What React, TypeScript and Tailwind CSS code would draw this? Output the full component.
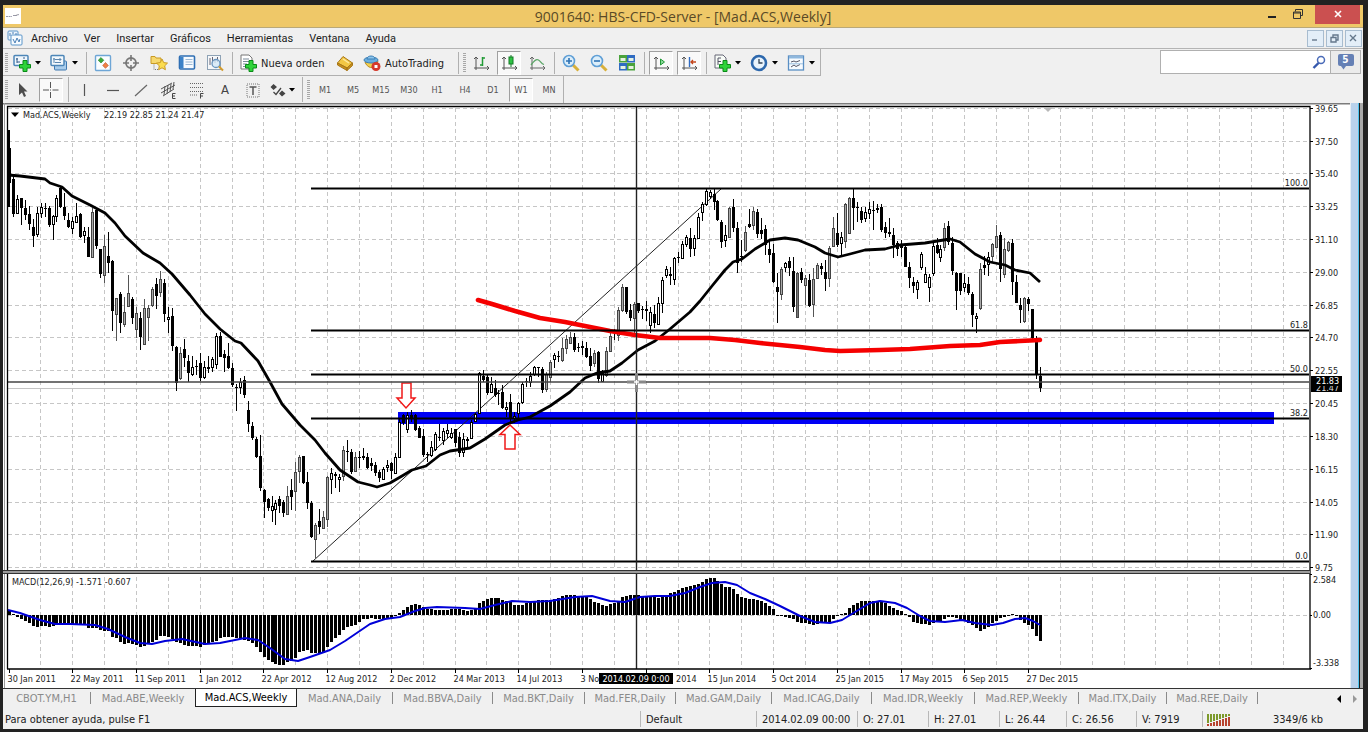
import type { ReactNode } from "react";

/* ---------- chart data ---------- */

// One weekly candle per entry: high, body top, body bottom, low (canvas units); the letter is the direction.
const CANDLES = `130 148 183 207 d,176 179 214 217 d,195 199 213 214 u,198 198 208 225 d,200 208 215 220 d,206 214 224 230 d,219 227 236 247 d,207 213 234 237 u,203 207 213 218 u,203 208 209 217 d,
206 208 225 227 d,215 216 224 240 u,195 198 216 222 u,187 188 207 208 d,193 207 216 220 d,213 220 227 228 d,217 221 228 234 u,203 216 222 223 u,213 214 237 238 d,227 231 235 243 u,
227 237 257 257 d,208 212 257 257 g,209 210 246 249 d,249 249 274 278 d,235 246 275 283 g,232 256 263 273 d,260 261 311 331 d,298 298 314 341 g,292 294 323 333 d,297 312 324 327 g,
275 293 306 307 g,297 299 318 324 d,307 313 329 338 g,312 318 337 350 d,299 308 344 344 g,305 308 317 341 g,287 289 305 307 g,278 284 296 309 d,271 279 292 297 g,279 283 314 322 d,
307 317 319 333 u,308 316 346 351 d,346 347 383 391 d,347 353 378 380 g,339 349 358 367 d,355 361 373 382 d,356 367 374 376 u,360 366 367 375 d,353 363 378 381 d,361 367 377 379 u,
356 367 368 373 u,357 359 367 372 u,333 336 364 369 u,332 336 357 357 d,350 354 358 372 d,343 356 368 369 d,363 368 385 387 d,384 387 388 411 d,378 382 387 394 u,376 380 395 398 d,
401 410 424 432 d,422 426 438 440 d,437 439 457 458 d,435 456 488 491 d,489 490 502 518 d,498 499 508 511 d,496 506 510 522 u,500 503 509 525 u,496 499 506 513 d,500 502 513 517 d,
486 496 514 515 g,479 490 497 510 d,462 472 491 511 g,455 457 471 483 g,456 456 483 484 d,472 482 503 509 d,501 503 537 538 d,523 525 539 559 g,509 521 527 534 d,511 517 528 529 g,
476 477 519 527 g,468 473 479 494 u,472 474 476 488 d,474 477 479 492 u,446 450 476 481 g,440 451 452 462 d,449 452 472 474 d,452 457 471 472 g,451 457 458 468 d,448 456 458 460 d,
453 457 468 469 d,458 463 466 471 d,462 465 473 476 d,470 472 478 482 d,467 469 479 480 u,460 465 467 472 u,462 463 471 479 d,453 457 473 474 u,418 422 457 457 u,414 415 423 425 d,
412 415 429 433 u,410 415 419 422 d,414 415 430 431 d,426 428 438 438 d,429 436 455 457 d,452 454 455 462 d,441 447 455 457 u,432 434 449 451 u,424 437 438 441 d,428 431 440 445 u,
424 430 433 438 u,428 433 437 439 u,429 429 443 447 d,432 437 453 457 d,433 439 452 457 u,437 439 441 448 d,420 422 438 439 u,413 414 421 422 u,372 373 413 413 u,370 376 380 382 d,
375 377 393 395 d,377 384 392 393 u,380 388 395 397 d,390 393 394 405 d,385 392 408 409 d,402 407 409 417 u,394 402 418 422 d,412 416 418 423 u,402 403 413 418 u,382 384 402 404 u,
378 381 382 387 d,372 376 382 387 u,366 367 374 376 u,367 367 368 377 d,367 369 390 393 d,372 374 389 392 g,360 362 377 382 g,353 355 359 368 u,351 356 357 362 d,338 348 360 362 g,
335 339 348 354 g,332 337 343 344 g,333 337 350 352 d,343 347 348 352 d,341 346 348 355 d,342 348 357 358 d,348 356 366 371 d,350 353 363 367 g,351 352 379 383 d,370 373 381 382 u,
347 351 375 377 g,333 336 351 352 g,329 332 333 340 d,307 310 335 341 g,284 287 310 312 g,287 287 312 314 d,304 310 318 321 d,302 304 318 335 g,303 303 311 313 d,306 309 310 319 d,
301 309 311 321 d,307 312 325 333 u,305 314 323 328 d,297 303 324 325 u,277 280 303 313 u,266 269 275 278 u,267 274 276 285 d,257 258 279 285 u,252 257 258 263 d,241 244 258 259 u,
235 237 244 247 u,228 238 249 257 d,235 238 248 256 u,213 217 238 238 u,202 204 212 221 u,189 191 204 206 u,190 192 196 199 u,189 194 202 210 d,200 201 220 221 d,220 222 242 248 d,
225 235 240 247 u,207 208 237 238 g,199 207 228 232 d,222 228 263 273 d,240 256 257 262 d,226 232 250 252 g,209 224 227 228 d,207 211 225 230 g,209 212 234 238 d,218 230 234 239 d,
225 229 245 255 d,240 249 255 263 d,244 253 282 283 d,273 287 292 323 d,267 269 294 300 g,262 263 267 272 u,257 261 268 276 d,257 271 307 312 d,272 273 317 317 G,268 272 280 283 d,
275 278 285 305 g,274 280 306 307 d,268 279 304 317 g,263 265 278 279 g,263 266 269 275 d,260 272 279 291 d,246 248 278 287 g,217 228 246 247 g,213 233 245 247 d,232 237 243 257 u,
203 204 241 248 g,197 198 233 234 g,189 198 208 230 d,202 207 208 222 d,207 211 220 223 d,207 212 218 222 u,202 209 213 219 u,201 210 211 230 d,204 208 210 213 d,204 207 230 232 d,
222 227 233 238 d,218 232 234 237 d,228 235 245 258 d,241 243 249 256 d,240 245 248 257 d,245 247 267 267 d,262 267 278 288 d,277 282 286 293 d,280 282 289 299 u,252 254 267 270 u,
267 274 282 283 u,274 277 287 302 u,241 246 273 276 u,238 245 253 254 d,245 249 257 262 u,223 228 247 251 g,221 226 242 245 d,237 243 271 275 d,272 273 291 310 d,273 273 291 295 d,
274 283 287 292 u,277 284 293 295 d,292 294 315 327 d,313 316 318 333 u,263 269 308 310 g,256 265 268 275 d,252 257 264 276 u,243 244 256 263 g,225 236 247 248 g,232 235 269 282 d,
238 249 274 278 g,241 242 250 252 g,239 243 282 295 d,275 282 303 303 d,298 305 310 323 d,297 298 321 323 g,297 299 304 311 d,309 309 338 342 d,336 340 374 379 d,367 376 388 392 d`
  .split(",")
  .map((row) => {
    const [h, t, b, l, kind] = row.trim().split(" ");
    return { high: +h, top: +t, bottom: +b, low: +l, kind };
  });

// Histogram key points: candle index and offset from zero in thirds of a unit; the rest is interpolated.
const MACD_KEYS: [number, number][] = [
  [0, -15], [1, -3], [2, 5], [3, 11], [4, 18], [5, 25], [6, 32], [7, 35], [8, 33], [10, 35], [12, 31], [14, 30], [16, 27], [19, 30],
  [20, 40], [22, 38], [23, 45], [25, 48], [26, 65], [27, 70], [28, 82], [29, 87], [30, 85], [32, 90], [33, 95], [34, 92], [36, 80],
  [37, 75], [38, 63], [39, 62], [40, 65], [41, 72], [42, 80], [43, 85], [45, 92], [48, 95], [50, 85], [52, 77], [53, 70], [54, 65],
  [56, 67], [57, 70], [59, 75], [61, 83], [62, 97], [63, 112], [64, 127], [65, 135], [66, 142], [67, 147], [68, 149], [69, 149],
  [70, 141], [71, 138], [72, 128], [73, 112], [74, 108], [75, 105], [76, 113], [79, 113], [80, 95], [81, 80], [82, 70], [83, 60],
  [84, 45], [85, 35], [87, 30], [88, 20], [89, 13], [91, 10], [94, 12], [96, 9], [97, 3], [98, -7], [99, -15], [100, -23], [101, -29],
  [102, -32], [103, -29], [104, -25], [105, -17], [108, -16], [112, -17], [113, -17], [115, -13], [116, -15], [117, -20], [118, -35],
  [119, -43], [120, -47], [121, -50], [123, -50], [124, -45], [126, -38], [127, -30], [129, -30], [130, -35], [131, -40], [133, -45],
  [136, -45], [138, -52], [139, -57], [141, -61], [143, -57], [145, -53], [146, -47], [147, -40], [149, -30], [150, -28], [151, -33],
  [152, -37], [153, -43], [154, -53], [155, -58], [158, -60], [160, -55], [163, -52], [165, -60], [167, -70], [169, -80], [171, -87],
  [173, -93], [174, -100], [175, -107], [176, -111], [177, -111], [178, -102], [179, -93], [180, -85], [181, -83], [182, -77],
  [183, -63], [184, -53], [186, -47], [187, -49], [189, -43], [190, -37], [191, -28], [192, -17], [193, 1], [194, 3], [195, 7],
  [197, 13], [198, 20], [200, 25], [202, 31], [204, 25], [206, 20], [207, 13], [208, 2], [209, -2], [210, -7], [211, -20], [212, -30],
  [213, -37], [214, -43], [217, -43], [219, -40], [220, -35], [221, -28], [222, -22], [223, -15], [224, -12], [225, -3], [226, 7],
  [227, 20], [228, 25], [231, 29], [232, 23], [234, 18], [235, 13], [236, 7], [237, 5], [238, 8], [241, 25], [242, 30], [243, 40],
  [244, 47], [245, 41], [246, 35], [247, 25], [248, 18], [249, 10], [250, 7], [251, 3], [252, -3], [253, 3], [254, 15], [255, 25],
  [256, 30], [257, 43], [258, 62], [259, 77],
];

const HISTOGRAM: number[] = [];
MACD_KEYS.forEach(([i, v], k) => {
  const [j, w] = MACD_KEYS[k + 1] ?? [i + 1, v];
  for (let n = i; n < j; n++) HISTOGRAM.push((v + ((w - v) * (n - i)) / (j - i)) / 3);
});

const MA_FAST =
  "8,175 20,176 45,179 50,183 62,187 72,196 90,205 105,213 115,223 125,236 143,253 160,263 172,274 190,295 205,314 220,329 235,341 241,343 258,361 270,382 282,404 300,425 315,440 325,453 340,470 358,482 370,485 377,487 390,483 402,476 412,470 426,466 440,455 450,451 470,448 485,439 505,425 518,420 530,417 550,406 570,392 585,378 597,373 610,371 622,363 638,350 655,341 670,329 690,312 700,301 712,286 725,270 733,262 742,259 755,249 770,240 785,238 798,240 815,247 825,253 838,257 850,254 865,250 885,249 900,245 925,243 950,239 960,242 975,254 990,262 1005,265 1015,270 1030,273 1040,282";
const MA_SLOW =
  "478,300 492,304 515,311 540,318 565,322 590,327 610,331 635,335 660,338 710,338 735,340 760,343 800,347 825,350 840,351 880,350 910,349 950,346 980,345 1000,342 1020,341 1040,340";
const SIGNAL =
  "8,610 20,613 40,620 55,624 70,624 95,625 108,629 125,637 140,643 152,644 165,641 182,639 205,644 220,643 245,638 258,640 270,648 285,659 298,661 310,657 330,650 345,641 370,624 385,619 400,617 415,611 425,608 437,607 465,608 480,609 495,605 512,601 530,602 550,601 575,597 592,596 610,601 625,602 640,597 655,596 670,596 685,593 700,587 712,583 725,582 737,585 750,593 765,599 780,606 800,616 815,622 830,623 842,620 855,612 870,603 880,601 895,603 907,608 920,616 930,621 945,622 962,620 975,623 992,625 1003,623 1015,619 1025,618 1033,621 1040,625";

const PRICES = ["39.65", "37.50", "35.40", "33.25", "31.10", "29.00", "26.85", "24.70", "22.55", "20.45", "18.30", "16.15", "14.05", "11.90", "9.75"];
// The labels on both sides of the crosshair date are cut short by it.
const DATES = ["30 Jan 2011", "22 May 2011", "11 Sep 2011", "1 Jan 2012", "22 Apr 2012", "12 Aug 2012", "2 Dec 2012", "24 Mar 2013", "14 Jul 2013", "3 No", "2014", "15 Jun 2014", "5 Oct 2014", "25 Jan 2015", "17 May 2015", "6 Sep 2015", "27 Dec 2015"];
const FIBS: [string, number][] = [["100.0", 188], ["61.8", 330], ["50.0", 374], ["38.2", 418], ["0.0", 561]];

const candleX = (i: number) => Math.round(8.7 + 3.982 * i);
const gridX = (k: number) => Math.round(8.6 + 31.856 * k) + 0.5;
const gridY = (k: number) => Math.round(107.7 + 32.82 * k) + 0.5;

function Chart() {
  return (
    <svg
      viewBox="3 103 1347 585"
      preserveAspectRatio="xMinYMin meet"
      className="min-w-0 flex-1 bg-white font-['DejaVu_Sans_Condensed','DejaVu_Sans',sans-serif] text-[9px]"
      role="img"
      aria-label="Mad.ACS, Weekly"
    >
      <path d="M3 103.5H1350" stroke="#7c7c7c" strokeWidth="2" />
      <path d="M4.5 103V688" stroke="#9a9a9a" />
      <g stroke="#c6c6c6" strokeDasharray="4 3">
        {PRICES.map((p, k) => (
          <path key={p} d={`M8 ${gridY(k)}H1309`} />
        ))}
        {Array.from({ length: 40 }, (_, k) => (
          <path key={k} d={`M${gridX(k + 1)} 108V669`} />
        ))}
        <path d="M8 615.5H1309" />
      </g>
      <path d="M8 388.5H1309" stroke="#c4c4c4" />

      <rect x="398" y="412" width="876" height="12" fill="#0000f5" />
      <path d="M313 561L721 189" stroke="#222" fill="none" />

      <g shapeRendering="crispEdges">
        <rect x="8" y="130" width="1" height="77" />
        {CANDLES.map((c, i) => {
          const x = candleX(i);
          const gray = c.kind === "g" || c.kind === "G";
          const wick = gray ? "#555" : "#000";
          const fill = c.kind === "G" ? "#777" : gray ? "#aaa" : "#fff";
          return (
            <g key={i}>
              <rect x={x} y={c.high} width="1" height={c.low - c.high} fill={wick} />
              {c.kind === "d" ? (
                <rect x={x - 1} y={c.top} width="3" height={Math.max(1, c.bottom - c.top)} fill="#000" />
              ) : (
                <>
                  <rect x={x - 1} y={c.top} width="3" height={c.bottom - c.top + 1} fill={gray ? "#444" : "#000"} />
                  <rect x={x} y={c.top + 1} width="1" height={Math.max(0, c.bottom - c.top - 1)} fill={fill} />
                </>
              )}
            </g>
          );
        })}
        {HISTOGRAM.map((v, i) => (
          <rect key={i} x={candleX(i) - 1} y={v < 0 ? 615 + v : 615} width="3" height={Math.max(1, Math.abs(v))} />
        ))}
      </g>

      <polyline points={MA_FAST} fill="none" stroke="#000" strokeWidth="2.800" strokeLinejoin="round" />
      <polyline points={MA_SLOW} fill="none" stroke="#f50000" strokeWidth="4.600" strokeLinecap="round" strokeLinejoin="round" />
      <polyline points={SIGNAL} fill="none" stroke="#0000d8" strokeWidth="2" strokeLinejoin="round" />

      {FIBS.map(([label, y]) => (
        <g key={label}>
          <path d={`M311 ${y + 0.5}H1309`} stroke="#000" strokeWidth="2" />
          <text x="1308" y={y - 2} textAnchor="end" fill="#222">{label}</text>
        </g>
      ))}

      <path d="M402 383H411V398H415L406 408L397 398H402Z" fill="#fff" stroke="#f01818" strokeWidth="1.5" />
      <path d="M505 449H515V434.500H520L510 425L500 434.500H505Z" fill="#fff" stroke="#f01818" strokeWidth="1.5" />

      <path d="M8 382H1309" stroke="#444" strokeWidth="1.4" />
      <path d="M636.500 107V669" stroke="#222" strokeWidth="1.4" />
      <path d="M627 382H646M636.500 373V392" stroke="#888" strokeWidth="3" />
      <path d="M634 382H639M636.500 380V385" stroke="#fff" strokeWidth="1.4" />

      <path d="M7.500 669V106.500H1310V669M7 669H1311" fill="none" stroke="#000" strokeWidth="1.3" />
      <rect x="3" y="570" width="1307" height="3" fill="#9a9a9a" />
      <path d="M3 570.500H1310M3 573.500H1310" stroke="#333" />
      <path d="M1043 107H1053L1048 112Z" fill="#b8b8b8" />

      <path d="M11 112.500H19L15 117Z" />
      <text x="23" y="118" fill="#222">Mad.ACS,Weekly</text>
      <text x="104" y="118" fill="#222">22.19 22.85 21.24 21.47</text>
      <text x="12" y="585" fill="#222">MACD(12,26,9) -1.571 -0.607</text>

      {PRICES.map((p, k) => (
        <g key={p}>
          <path d={`M1310 ${gridY(k)}H1313`} stroke="#000" />
          <text x="1315" y={gridY(k) + 3} fill="#222">{p}</text>
        </g>
      ))}
      <path d="M1310 574.500H1312M1310 615.500H1312M1310 668.500H1312" stroke="#000" />
      <g fill="#222">
        <text x="1313" y="583">2.584</text>
        <text x="1313" y="618">0.00</text>
        <text x="1313" y="666">-3.338</text>
      </g>
      <rect x="1311" y="376" width="31" height="16" />
      <text x="1316" y="391" fill="#ddd">21.47</text>
      <rect x="1311" y="376" width="31" height="10" />
      <text x="1316" y="384" fill="#fff">21.83</text>

      {DATES.map((d, k) => (
        <g key={d}>
          <path d={`M${gridX(k * 2)} 669V673`} stroke="#000" />
          {d === "2014" ? (
            <text x="676" y="682" fill="#222">{d}</text>
          ) : (
            <text x={gridX(k * 2) - 2} y="682" fill="#222">{d}</text>
          )}
        </g>
      ))}
      <rect x="599" y="673" width="74" height="11" />
      <text x="636" y="682" textAnchor="middle" fill="#fff">2014.02.09 0:00</text>
    </svg>
  );
}

/* ---------- icons ---------- */

function Icon({ children }: { children: ReactNode }) {
  return (
    <svg viewBox="0 0 18 18" className="h-[18px] w-[18px] shrink-0" fill="none" aria-hidden="true">
      {children}
    </svg>
  );
}

const plus = <path d="M10 6.500H14V10.500H17.500V14H14V17.500H10V14H6.500V10.500H10Z" fill="#2fd33a" stroke="#0a8a18" />;
const Caret = () => (
  <svg viewBox="0 0 6 4" className="h-1 w-1.5 shrink-0" aria-hidden="true">
    <path d="M0 0H6L3 3.500Z" fill="#000" />
  </svg>
);

const I = {
  app: (
    <Icon>
      <rect x="2" y="2" width="10" height="9" rx="1" fill="#eaf3fb" stroke="#5b95c9" />
      <rect x="5" y="6" width="11" height="10" rx="1" fill="#f6fbff" stroke="#5b95c9" />
      <path d="M7 10l2 4 2-5 2 4 1-3M4 4v3M7 3v2M10 4v2" stroke="#4a7fb5" />
    </Icon>
  ),
  newChart: (
    <Icon>
      <rect x="1" y="1.500" width="14" height="10" rx="1" fill="#eff6fc" stroke="#4d86b8" strokeWidth="1.500" />
      <path d="M4 4v5M3 5h2M4 8h3M10 4h2" stroke="#345f8c" />
      {plus}
    </Icon>
  ),
  profiles: (
    <Icon>
      <rect x="4.500" y="7" width="12" height="9" rx="1" fill="#a9cdec" stroke="#3f78b0" />
      <rect x="1" y="1.500" width="13" height="10" rx="1" fill="#f2f8fd" stroke="#4d86b8" strokeWidth="1.500" />
      <path d="M4 4v5M3 5h2M5 8.500h6M5 5.500h6M9.500 4l1.500 1.500L9.500 7" stroke="#5b86ae" />
    </Icon>
  ),
  market: (
    <Icon>
      <rect x="1.500" y="1.500" width="15" height="15" rx="1" fill="#fafdff" stroke="#6ea6d6" strokeWidth="1.400" />
      <path d="M7 3.500L9.800 6.300 7 9 4.200 6.300Z" fill="#3aa83a" stroke="#23822a" strokeWidth=".6" />
      <path d="M11.500 8.500L14.300 11.500 11.500 14.300 8.700 11.500Z" fill="#f08045" stroke="#b84c1c" strokeWidth=".6" />
    </Icon>
  ),
  data: (
    <Icon>
      <circle cx="9" cy="9" r="5" stroke="#777" strokeWidth="1.800" />
      <path d="M9 1V7M9 11V17M1 9H7M11 9H17" stroke="#777" strokeWidth="1.600" />
    </Icon>
  ),
  navigator: (
    <Icon>
      <path d="M1 2.500h4l1 1.500h5V9.500H1Z" fill="#f7d96f" stroke="#c99a25" />
      <path d="M4 10.500v5h4" stroke="#777" strokeDasharray="1 1" />
      <path d="M12 5l1.700 3.600 3.800.5-2.800 2.700.7 3.900L12 13.800 8.600 15.700l.7-3.900L6.500 9.100l3.800-.5Z" fill="#fbdc4e" stroke="#c99a25" />
    </Icon>
  ),
  terminal: (
    <Icon>
      <rect x="1.500" y="2" width="15" height="13" rx="1" fill="#f7fbff" stroke="#2f6fb4" strokeWidth="1.600" />
      <rect x="2" y="3" width="3.500" height="11.500" fill="#3c82c8" />
      <path d="M7.500 5.500h7M7.500 8h7M7.500 10.500h7" stroke="#9db9d4" />
    </Icon>
  ),
  tester: (
    <Icon>
      <rect x="1.500" y="1.500" width="13" height="14" fill="#f6f8fa" stroke="#8ea2b5" />
      <path d="M4 4v7M6.500 3v6M9 5v4M11.500 3v5" stroke="#667" />
      <circle cx="10" cy="9.500" r="4" fill="#d5e8f8" fillOpacity=".8" stroke="#6a96bf" strokeWidth="1.300" />
      <path d="M13 12.500l4 4" stroke="#d39b2c" strokeWidth="2" />
    </Icon>
  ),
  order: (
    <Icon>
      <path d="M2 1h8l3 3v11H2Z" fill="#fff" stroke="#777" />
      <path d="M4 5h6M4 7.500h6M4 10h4M4 12.500h3" stroke="#7a8a9a" />
      {plus}
    </Icon>
  ),
  gold: (
    <Icon>
      <path d="M7 2.500L16.500 9 11 14 1.500 9Z" fill="#f2c744" stroke="#a87616" />
      <path d="M1.500 9v2l9.500 5.500V14ZM11 16.500l5.500-5V9L11 14Z" fill="#c8921e" stroke="#a87616" />
      <path d="M7 5l6 4" stroke="#fdeaa0" strokeWidth="1.500" />
    </Icon>
  ),
  robot: (
    <Icon>
      <path d="M2 8c2 6 9 8 12 2l1-3Z" fill="#f2cf4c" stroke="#b88a1d" />
      <ellipse cx="8" cy="6" rx="7" ry="3" fill="#6aaede" stroke="#3d7fb5" />
      <path d="M4 5c0-4 8-4 8 0Z" fill="#8cc6ee" stroke="#3d7fb5" />
      <circle cx="13" cy="12.500" r="4.500" fill="#d5392b" />
      <rect x="11.500" y="11" width="3" height="3" fill="#fff" />
    </Icon>
  ),
  bars: (
    <Icon>
      <path d="M4 3V16M2 14H17M2 5l2-2 2 2M15 12l2 2-2 2" stroke="#555" />
      <path d="M10.500 4h2.500M8 11h2.500M10.500 3V12" stroke="#219a35" strokeWidth="1.500" />
    </Icon>
  ),
  candles: (
    <Icon>
      <path d="M4 3V16M2 14H17M2 5l2-2 2 2M15 12l2 2-2 2" stroke="#555" />
      <path d="M11 1V13" stroke="#137a24" />
      <rect x="9" y="3" width="4" height="7" fill="#2fc344" stroke="#137a24" />
    </Icon>
  ),
  line: (
    <Icon>
      <path d="M4 3V16M2 14H17M2 5l2-2 2 2M15 12l2 2-2 2" stroke="#666" />
      <path d="M3 11C6 7 8 4.500 10.500 6S13 9.500 16 10.500" stroke="#5aa566" strokeWidth="1.300" />
    </Icon>
  ),
  zoomIn: (
    <Icon>
      <path d="M11 11l5.500 5.500" stroke="#d8b03a" strokeWidth="3" />
      <circle cx="7" cy="7" r="5.500" fill="#dceefa" stroke="#5f9fd6" strokeWidth="1.600" />
      <path d="M4 7h6M7 4v6" stroke="#2f73b5" strokeWidth="1.600" />
    </Icon>
  ),
  zoomOut: (
    <Icon>
      <path d="M11 11l5.500 5.500" stroke="#d8b03a" strokeWidth="3" />
      <circle cx="7" cy="7" r="5.500" fill="#dceefa" stroke="#5f9fd6" strokeWidth="1.600" />
      <path d="M4 7h6" stroke="#2f73b5" strokeWidth="1.600" />
    </Icon>
  ),
  tile: (
    <Icon>
      <rect x="1" y="1" width="8" height="7.500" fill="#4aa33c" />
      <rect x="9" y="1" width="8" height="7.500" fill="#2f6bc2" />
      <rect x="1" y="9" width="8" height="7.500" fill="#2f6bc2" />
      <rect x="9" y="9" width="8" height="7.500" fill="#4aa33c" />
      <path d="M2.500 4h5v3h-5zM10.500 4h5v3h-5zM2.500 12h5v3h-5zM10.500 12h5v3h-5z" fill="#e6f2e2" />
    </Icon>
  ),
  scroll: (
    <Icon>
      <path d="M4 3V16M2 14H17M2 5l2-2 2 2M15 12l2 2-2 2" stroke="#555" />
      <path d="M8.500 5L12.500 8 8.500 11Z" fill="#8bd69a" stroke="#219a35" />
    </Icon>
  ),
  shift: (
    <Icon>
      <path d="M4 3V16M2 14H17M2 5l2-2 2 2M15 12l2 2-2 2" stroke="#555" />
      <path d="M9.500 3V13" stroke="#2f6bc2" strokeWidth="1.400" />
      <path d="M16 8h-5M13 6l-2 2 2 2" stroke="#c2451b" strokeWidth="1.300" />
    </Icon>
  ),
  indicators: (
    <Icon>
      <path d="M2 1h8l3 3v10H2Z" fill="#f7fbf7" stroke="#667" />
      <path d="M5 4v7M5 4h3M5 7.500h3" stroke="#556" />
      {plus}
    </Icon>
  ),
  clock: (
    <Icon>
      <circle cx="9" cy="9" r="7" fill="#e8f3fc" stroke="#2d68ad" strokeWidth="2.600" />
      <path d="M9 5v4h3.500" stroke="#345" strokeWidth="1.300" />
    </Icon>
  ),
  template: (
    <Icon>
      <rect x="1.500" y="2" width="15" height="14" fill="#f7fbff" stroke="#5a8fc4" strokeWidth="1.300" />
      <path d="M2 3.500h14" stroke="#8fb8de" strokeWidth="2" />
      <path d="M4 8l3-1 2 1 4-1.500M4 13l3-2 2 1.500 4-2" stroke="#556" />
      <path d="M2 9.800h14" stroke="#9bbfe0" />
    </Icon>
  ),
  cursor: (
    <Icon>
      <path d="M5 2V14L8 11.500 10 16 12 15 10 10.500H13.500Z" fill="#4d4d4d" />
    </Icon>
  ),
  cross: (
    <Icon>
      <path d="M8.500 1V7M8.500 11V17M1 9H7M10.500 9H16.500M8 9h1" stroke="#555" />
    </Icon>
  ),
  vline: <Icon><path d="M8.500 3V15" stroke="#555" strokeWidth="1.200" /></Icon>,
  hline: <Icon><path d="M3 9.500H15" stroke="#555" strokeWidth="1.200" /></Icon>,
  trend: <Icon><path d="M3 15L15 4" stroke="#666" strokeWidth="1.200" /></Icon>,
  channel: (
    <Icon>
      <path d="M1 12L15 4M1 8L12 2M3 15L14 8M5 5l-1 9M8 4l-1 9M11 3l-1 8M14 1l-1 7" stroke="#555" />
      <path d="M15.500 12.500H12.500V17.500H15.500M12.500 15H15" stroke="#444" />
    </Icon>
  ),
  fibo: (
    <Icon>
      <path d="M2 2.500H16M2 6.500H16M2 10.500H16M2 14H10" stroke="#666" strokeDasharray="1 1" />
      <path d="M15.500 12.500H12.500V17.500M12.500 15H15" stroke="#444" />
    </Icon>
  ),
  label: (
    <Icon>
      <rect x="3" y="3" width="12" height="13" stroke="#777" strokeDasharray="1 1" />
      <path d="M5.500 6H12.500M9 6V14" stroke="#555" strokeWidth="1.500" />
    </Icon>
  ),
  arrows: (
    <Icon>
      <path d="M4.500 3L8 6 4.500 9 1.500 6ZM13 9.500L16.500 12.500 13 15.500 10 12.500Z" fill="#444" />
      <path d="M4.500 11l2.500 2.500L12 7" stroke="#444" strokeWidth="1.300" />
    </Icon>
  ),
};

/* ---------- toolbar parts ---------- */

const Grip = () => <span className="mr-px ml-0.5 h-5 w-[3px] shrink-0 bg-[repeating-linear-gradient(#a8a8a8_0_1px,#f0f0f0_1px_2px)]" />;
const Divider = () => (
  <span className="flex w-1.5 shrink-0 justify-center self-stretch py-px">
    <span className="w-px bg-[#b0b0b0]" />
  </span>
);

function Tool({ name, active, children }: { name: string; active?: boolean; children: ReactNode }) {
  return (
    <button
      type="button"
      aria-label={name}
      className={
        active
          ? "mx-0.5 flex h-6 w-6 shrink-0 items-center justify-center border border-[#a0a0a0] border-r-white border-b-white bg-[#f9f9f9]"
          : "flex h-6 w-7 shrink-0 items-center justify-center"
      }
    >
      {children}
    </button>
  );
}

function DropTool({ name, narrow, children }: { name: string; narrow?: boolean; children: ReactNode }) {
  return (
    <button
      type="button"
      aria-label={name}
      className={`flex h-6 shrink-0 items-center ${narrow ? "w-8 gap-0.5 pl-0.5" : "w-[37px] gap-1 pl-1"}`}
    >
      {children}
      <Caret />
    </button>
  );
}

const MENUS = ["Archivo", "Ver", "Insertar", "Gráficos", "Herramientas", "Ventana", "Ayuda"];
const PERIODS = ["M1", "M5", "M15", "M30", "H1", "H4", "D1", "W1", "MN"];
const TABS: [string, string][] = [
  ["CBOT.YM,H1", "w-[88px]"],
  ["Mad.ABE,Weekly", "w-[104px]"],
  ["Mad.ACS,Weekly", "w-[102px]"],
  ["Mad.ANA,Daily", "w-[96px]"],
  ["Mad.BBVA,Daily", "w-[100px]"],
  ["Mad.BKT,Daily", "w-[92px]"],
  ["Mad.FER,Daily", "w-[91px]"],
  ["Mad.GAM,Daily", "w-[96px]"],
  ["Mad.ICAG,Daily", "w-[100px]"],
  ["Mad.IDR,Weekly", "w-[103px]"],
  ["Mad.REP,Weekly", "w-[104px]"],
  ["Mad.ITX,Daily", "w-[88px]"],
  ["Mad.REE,Daily", "w-[91px]"],
];
const STATUS: [string, string][] = [
  ["Default", "w-[116px]"],
  ["2014.02.09 00:00", "w-[101px]"],
  ["O: 27.01", "w-[71px]"],
  ["H: 27.01", "w-[71px]"],
  ["L: 26.44", "w-[67px]"],
  ["C: 26.56", "w-[70px]"],
  ["V: 7919", "w-[66px]"],
];

export default function App() {
  return (
    <div className="flex h-screen flex-col overflow-hidden bg-[#222] pt-[5px] pr-[5px] pb-[3px] pl-[3px] font-['DejaVu_Sans_Condensed','DejaVu_Sans',sans-serif] text-[11px] leading-none text-[#222]">
      <header className="flex h-[23px] shrink-0 items-center border-b border-[#b9a878] bg-[#efc868]">
        <svg viewBox="0 0 16 16" className="ml-0.5 h-4 w-4" aria-hidden="true">
          <rect width="16" height="16" fill="#fff" />
          <path d="M1 8.500h6M8 7.500h3l3-1" stroke="#99a" strokeDasharray="2 .6" />
        </svg>
        <h1 className="flex-1 pt-0.5 pl-[86px] text-center font-['Open_Sans','Noto_Sans',sans-serif] text-[14px] text-[#5a4a26]">
          9001640: HBS-CFD-Server - [Mad.ACS,Weekly]
        </h1>
        <button type="button" aria-label="Minimizar" className="flex h-full w-[26px] items-center justify-center">
          <svg viewBox="0 0 8 8" className="h-2 w-2"><path d="M0 5h8" stroke="#222" strokeWidth="2" /></svg>
        </button>
        <button type="button" aria-label="Restaurar" className="flex h-full w-[26px] items-center justify-center">
          <svg viewBox="0 0 10 10" className="mb-1 h-2.5 w-2.5" fill="none" stroke="#333"><path d="M.5 3h7v6.500h-7zM.5 4h7M2.500 2.500V.5h7v6h-2" /></svg>
        </button>
        <button type="button" aria-label="Cerrar" className="mr-[3px] mb-1 ml-1 flex h-[19px] w-[45px] items-center justify-center bg-[#cb5050]">
          <svg viewBox="0 0 8 8" className="h-2 w-2"><path d="M1 1l6 6M7 1L1 7" stroke="#fff" strokeWidth="1.600" /></svg>
        </button>
      </header>

      <nav className="flex h-[21px] shrink-0 items-center border-b border-[#b4b4b4] bg-[#f0f0f0] pl-[3px] font-[Roboto,'Liberation_Sans',sans-serif]">
        {I.app}
        <div className="ml-[7px] flex flex-1 items-center gap-4">
          {MENUS.map((m) => (
            <button key={m} type="button">{m}</button>
          ))}
        </div>
        <div className="flex gap-0.5 pr-px">
          {["M1 6h5", "M1 3.500h5V8H1zM3 3V1h5v5H6.500", "M1 1l6 6M7 1L1 7"].map((d, k) => (
            <button key={d} type="button" aria-label={["Minimizar ventana", "Restaurar ventana", "Cerrar ventana"][k]} className="flex h-[17px] w-[17px] items-center justify-center border border-[#a8bccf] bg-[#e3eef8]">
              <svg viewBox="0 0 9 9" className="h-[9px] w-[9px]" fill="none" stroke="#65788c" strokeWidth="1.400"><path d={d} /></svg>
            </button>
          ))}
        </div>
      </nav>

      <div className="flex h-[54px] shrink-0 bg-[#f0f0f0]">
        <div className="flex flex-1 flex-col items-start">
          <div className="flex h-[27px] items-center border-r border-b border-[#b0b0b0] pt-0.5">
            <Grip />
            <DropTool name="Nuevo gráfico">{I.newChart}</DropTool>
            <DropTool name="Perfiles">{I.profiles}</DropTool>
            <Divider />
            <Tool name="Observación de mercado">{I.market}</Tool>
            <Tool name="Ventana de datos">{I.data}</Tool>
            <Tool name="Navegador">{I.navigator}</Tool>
            <Tool name="Terminal">{I.terminal}</Tool>
            <Tool name="Probador">{I.tester}</Tool>
            <Divider />
            <button type="button" className="flex h-6 w-24 shrink-0 items-center gap-1 pl-1 whitespace-nowrap">{I.order}Nueva orden</button>
            <Tool name="MetaEditor">{I.gold}</Tool>
            <button type="button" className="flex h-6 w-24 shrink-0 items-center gap-1 pl-1 whitespace-nowrap">{I.robot}AutoTrading</button>
            <Divider />
            <Grip />
            <Tool name="Barras">{I.bars}</Tool>
            <Tool name="Velas" active>{I.candles}</Tool>
            <Tool name="Línea">{I.line}</Tool>
            <Divider />
            <Tool name="Acercar">{I.zoomIn}</Tool>
            <Tool name="Alejar">{I.zoomOut}</Tool>
            <Tool name="Mosaico">{I.tile}</Tool>
            <Divider />
            <Tool name="Desplazamiento automático" active>{I.scroll}</Tool>
            <Tool name="Desplazar gráfico" active>{I.shift}</Tool>
            <Divider />
            <DropTool name="Indicadores">{I.indicators}</DropTool>
            <DropTool name="Periodos">{I.clock}</DropTool>
            <DropTool name="Plantillas">{I.template}</DropTool>
          </div>
          <div className="flex h-[27px] items-center border-r border-[#b0b0b0]">
            <Grip />
            <Tool name="Cursor">{I.cursor}</Tool>
            <Tool name="Cruz" active>{I.cross}</Tool>
            <Divider />
            <Tool name="Línea vertical">{I.vline}</Tool>
            <Tool name="Línea horizontal">{I.hline}</Tool>
            <Tool name="Línea de tendencia">{I.trend}</Tool>
            <Tool name="Canal">{I.channel}</Tool>
            <Tool name="Fibonacci">{I.fibo}</Tool>
            <Tool name="Texto"><span className="text-[13px] text-[#444]">A</span></Tool>
            <Tool name="Etiqueta">{I.label}</Tool>
            <DropTool name="Flechas" narrow>{I.arrows}</DropTool>
            <Divider />
            <Grip />
            {PERIODS.map((p) => (
              <Tool key={p} name={p} active={p === "W1"}>
                <span className="pt-px text-[9px] text-[#555]">{p}</span>
              </Tool>
            ))}
          </div>
        </div>
        <div className="mt-px mr-0.5 flex h-6 w-[201px] border border-[#b0b0b0]">
          <label className="flex flex-1 items-center bg-white pr-1">
            <input type="text" aria-label="Buscar" className="min-w-0 flex-1 bg-transparent px-1 outline-none" />
            <svg viewBox="0 0 14 14" className="h-3.5 w-3.5" fill="none" aria-hidden="true">
              <circle cx="9" cy="5" r="3.500" stroke="#4a6bb8" strokeWidth="1.500" />
              <path d="M6.500 8L1.500 13" stroke="#3558ad" strokeWidth="2.400" />
            </svg>
          </label>
          <button type="button" className="flex w-[30px] flex-col items-center justify-center border-l border-[#b0b0b0] bg-[#ebebeb]">
            <span className="flex h-3 w-4 items-center justify-center rounded-xs bg-[#6580b5] text-[10px] font-bold text-white">5</span>
            <svg viewBox="0 0 16 4" className="h-1 w-4" aria-hidden="true"><path d="M3 0H8L5.500 3.500Z" fill="#6580b5" /></svg>
          </button>
        </div>
      </div>

      <main className="flex min-h-0 flex-1 bg-white">
        <Chart />
        <div className="w-px bg-[#e6eef6]" />
        <div className="w-[7px] bg-[#b9d2ec]" />
        <div className="w-px bg-[#4fc4ee]" />
        <div className="w-px bg-[#222]" />
        <div className="w-[3px] bg-[#a9a9a9]" />
      </main>

      <div className="flex h-[21px] shrink-0 border-t border-[#333] bg-[#f0f0f0]">
        {TABS.map(([label, width], k) => (
          <button
            key={label}
            type="button"
            className={`${width} flex shrink-0 items-center justify-center whitespace-nowrap ${
              k === 2 ? "mb-0.5 border-x border-b border-[#222] bg-white text-black" : "mb-0.5 text-[#8a8a8a]"
            }`}
          >
            <span className="flex-1 text-center">{label}</span>
            {k !== 1 && k !== 2 && <span className="h-3 w-px bg-[#8a8a8a]" />}
          </button>
        ))}
        <div className="flex flex-1 items-center justify-end gap-3 pr-1.5">
          <button type="button" aria-label="Anterior"><svg viewBox="0 0 4 8" className="h-2 w-1"><path d="M4 0V8L0 4Z" /></svg></button>
          <button type="button" aria-label="Siguiente"><svg viewBox="0 0 4 8" className="h-2 w-1"><path d="M0 0V8L4 4Z" fill="#999" /></svg></button>
        </div>
      </div>

      <footer className="flex h-5 shrink-0 items-center bg-[#f0f0f0] py-0.5">
        <span className="flex-1 pt-px pl-0.5">Para obtener ayuda, pulse F1</span>
        {STATUS.map(([text, width]) => (
          <span key={text} className={`${width} flex h-full shrink-0 items-center border-l border-[#b8b8b8] pt-px pl-[5px] whitespace-nowrap`}>{text}</span>
        ))}
        <span className="flex h-full w-[161px] shrink-0 items-center border-l border-[#b8b8b8] pt-px pl-1">
          <svg viewBox="0 0 24 13" className="h-[13px] w-6" aria-hidden="true">
            {Array.from({ length: 8 }, (_, k) => (
              <g key={k}>
                <rect x={k * 3} y="1" width="2" height={9 - k} fill="#7d9a2c" />
                <rect x={k * 3} y={11 - k} width="2" height={2 + k} fill="#b8432f" />
              </g>
            ))}
          </svg>
          <span className="flex-1 pr-10 text-right">3349/6 kb</span>
        </span>
      </footer>
    </div>
  );
}
